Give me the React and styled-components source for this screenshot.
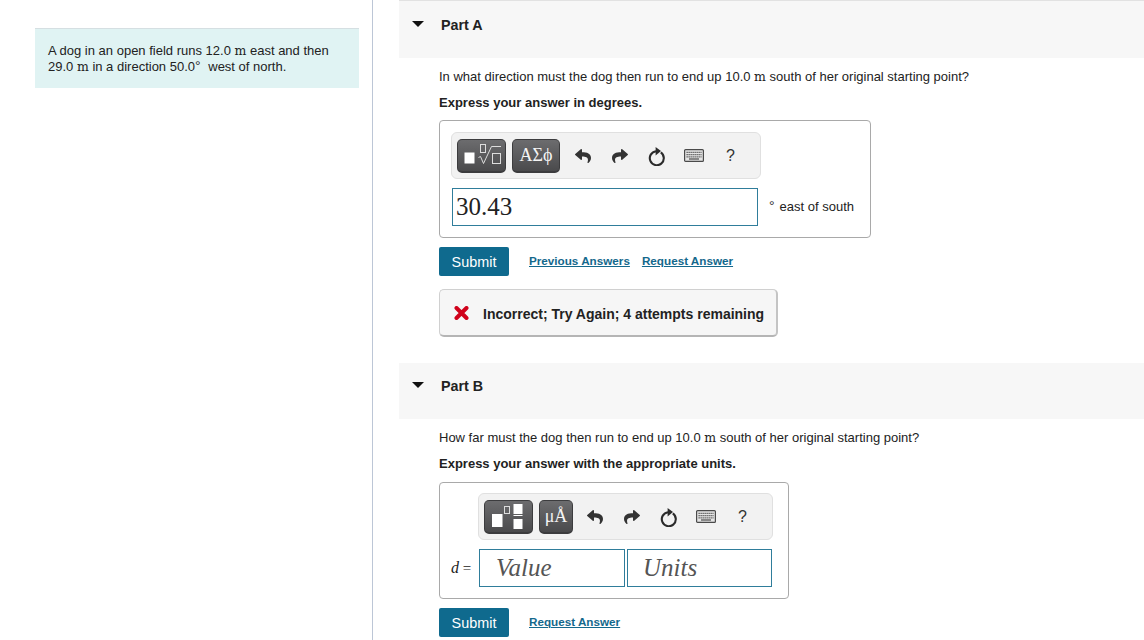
import React from "react";
import styled, { createGlobalStyle } from "styled-components";
import { FaReply, FaShare } from "react-icons/fa";

const GlobalStyle = createGlobalStyle`
  html, body {
    margin: 0;
    padding: 0;
    background: #fff;
    overflow: hidden;
  }
  * { box-sizing: border-box; }
`;

const Page = styled.div`
  display: flex;
  width: 1144px;
  height: 640px;
  overflow: hidden;
  font-family: "Liberation Sans", Arial, sans-serif;
  color: #222;
`;

const Sidebar = styled.aside`
  width: 373px;
  flex: none;
  height: 100%;
  padding: 28px 13px 0 35px;
  border-right: 1px solid #bcc6d6;
`;

const ProblemBox = styled.div`
  height: 60px;
  padding: 14px 13px 0;
  background: #e0f3f3;
  border-top: 1px solid #d5dfe2;
  font-size: 13px;
  line-height: 16px;
`;

const Main = styled.main`
  flex: 1;
  min-width: 0;
  padding-left: 26px;
`;

const PartHeader = styled.div`
  display: flex;
  align-items: center;
  height: ${(p) => p.$height}px;
  margin-top: ${(p) => p.$top || 0}px;
  padding: 0 0 ${(p) => p.$shift}px 13px;
  background: #f7f7f7;
  border-top: ${(p) => (p.$ruled ? "1px solid #e2e2e2" : "none")};
`;

const Caret = styled.span`
  width: 0;
  height: 0;
  margin-right: 17px;
  border-left: 6px solid transparent;
  border-right: 6px solid transparent;
  border-top: 6px solid #111;
  transform: translateY(-1px);
`;

const PartTitle = styled.h2`
  margin: 0;
  font-size: 14.3px;
  font-weight: 700;
  color: #222;
`;

const PartBody = styled.section`
  padding: ${(p) => p.$top}px 0 0 40px;
`;

const Question = styled.p`
  margin: 0;
  font-size: 13px;
  line-height: 16px;
`;

const Instruction = styled.p`
  margin: 10px 0 0;
  font-size: 13px;
  line-height: 16px;
  font-weight: 700;
`;

const Unit = styled.span`
  font-family: "DejaVu Serif", "Liberation Serif", serif;
  font-size: 12.5px;
`;

const AnswerBox = styled.div`
  width: ${(p) => p.$width}px;
  height: ${(p) => p.$height}px;
  margin-top: ${(p) => p.$top}px;
  padding: ${(p) => p.$pad}px 0 0 ${(p) => p.$left}px;
  border: 1px solid #a9a9a9;
  border-radius: 4px;
`;

const Toolbar = styled.div`
  display: flex;
  align-items: center;
  width: ${(p) => p.$width}px;
  height: 47px;
  margin-left: ${(p) => p.$indent || 0}px;
  padding-left: 5px;
  background: #f2f2f2;
  border: 1px solid #e0e0e0;
  border-radius: 6px;
`;

const TemplateButton = styled.button`
  display: flex;
  align-items: center;
  justify-content: center;
  width: ${(p) => p.$width}px;
  height: 34px;
  margin-right: ${(p) => p.$gap}px;
  padding: 0;
  color: #f4f4f4;
  background: linear-gradient(#6c6c6e, #4a4a4c);
  border: 1px solid #3c3c3e;
  border-bottom-width: 2px;
  border-radius: 5px;
  font-family: "Liberation Serif", serif;
  font-size: 18px;
`;

const ToolSlot = styled.span`
  display: flex;
  align-items: center;
  justify-content: center;
  flex: none;
  width: 37px;
  color: #333;
`;

const HelpMark = styled.span`
  font-size: 16px;
  color: #333;
`;

const AnswerRow = styled.div`
  display: flex;
  align-items: center;
  margin-top: 9px;
`;

const ValueInput = styled.div`
  display: flex;
  align-items: center;
  width: ${(p) => p.$width}px;
  height: 38px;
  margin-left: ${(p) => p.$indent || 0}px;
  margin-right: ${(p) => p.$gap || 0}px;
  padding-left: ${(p) => p.$pad}px;
  border: 1px solid #2f7d9b;
  font-family: "Liberation Serif", serif;
  font-size: 25px;
  font-style: ${(p) => (p.$hint ? "italic" : "normal")};
  color: ${(p) => (p.$hint ? "#555" : "#222")};
`;

const UnitSuffix = styled.span`
  display: flex;
  align-items: baseline;
  margin: 0 0 2px 11px;
  font-size: 13px;
`;

const Degree = styled.span`
  margin-right: ${(p) => p.$gap}px;
  font-size: 14px;
  line-height: 0;
  color: #333;
`;

const VarLabel = styled.span`
  width: 28px;
  font-family: "Liberation Serif", serif;
  font-size: 15px;
  white-space: nowrap;

  i { font-size: 16px; }
`;

const ActionRow = styled.div`
  display: flex;
  align-items: center;
  margin-top: 9px;
`;

const SubmitButton = styled.button`
  width: 70px;
  height: 29px;
  margin-right: 20px;
  padding: 0;
  background: #0f6a8e;
  color: #fff;
  border: none;
  border-radius: 2px;
  font-family: "Liberation Sans", Arial, sans-serif;
  font-size: 14.4px;
`;

const TextLink = styled.a`
  margin: 0 12px 2px 0;
  color: #14688c;
  font-size: 11.7px;
  font-weight: 700;
  text-decoration: underline;
`;

const Feedback = styled.div`
  display: flex;
  align-items: center;
  width: 339px;
  height: 48px;
  margin-top: 13px;
  padding: 3px 0 0 14px;
  background: #f6f6f6;
  border: 1px solid #d0d0d0;
  border-bottom: 2px solid #b5b5b5;
  border-right: 2px solid #c4c4c4;
  border-radius: 5px;
  font-size: 14px;
  font-weight: 700;
  color: #222;

  svg { margin: 0 14px 3px 0; }
`;

const RedoIcon = () => <FaShare size={16} />;
const UndoIcon = () => <FaReply size={16} />;

const ResetIcon = () => (
  <svg width="18" height="20" viewBox="0 0 18 20">
    <path d="M12.8 6.4 A7 7 0 1 1 8 5.2" fill="none" stroke="#2b2b2b" strokeWidth="2.1" />
    <path d="M7.6 1 L7.6 9.4 L13 5 Z" fill="#2b2b2b" />
  </svg>
);

const KeyboardIcon = () => (
  <svg width="20" height="13" viewBox="0 0 20 13">
    <rect x="0.6" y="0.6" width="18.8" height="11.8" rx="1" fill="#e4e4e4" stroke="#4a4a4a" strokeWidth="1.2" />
    <path d="M2.5 3.4h15M2.5 5.6h15M2.5 7.8h15" stroke="#555" strokeWidth="1.2" strokeDasharray="1.3 0.7" />
    <path d="M5 10h10" stroke="#555" strokeWidth="1.3" />
  </svg>
);

const RadicalGlyph = () => (
  <svg width="38" height="27" viewBox="0 0 38 27">
    <rect x="1.5" y="10.5" width="10" height="11" fill="#fff" />
    <rect x="17.5" y="2.5" width="5" height="8" fill="none" stroke="#ddd" />
    <path d="M15.5 15.5 L17.5 14.5 L20.5 21.5 L28.5 4.5 H38" fill="none" stroke="#ddd" strokeWidth="1" />
    <rect x="29.5" y="11.5" width="8" height="10" fill="none" stroke="#ddd" />
  </svg>
);

const FractionGlyph = () => (
  <svg width="34" height="27" viewBox="0 0 34 27">
    <rect x="0" y="11" width="10.5" height="13" fill="#fff" />
    <rect x="12.5" y="3.5" width="5" height="7" fill="none" stroke="#ddd" />
    <rect x="21.5" y="1" width="9" height="10" fill="#fff" />
    <rect x="21.5" y="12" width="9" height="1" fill="#fff" />
    <rect x="21.5" y="16" width="9" height="10" fill="#fff" />
  </svg>
);

const CrossIcon = () => (
  <svg width="15" height="14" viewBox="0 0 15 14">
    <path d="M2.5 2 L12.5 12 M12.5 2 L2.5 12" stroke="#d0021b" strokeWidth="4" strokeLinecap="round" />
  </svg>
);

const ToolIcons = () => (
  <>
    <ToolSlot><UndoIcon /></ToolSlot>
    <ToolSlot><RedoIcon /></ToolSlot>
    <ToolSlot><ResetIcon /></ToolSlot>
    <ToolSlot><KeyboardIcon /></ToolSlot>
    <ToolSlot><HelpMark>?</HelpMark></ToolSlot>
  </>
);

export default function App() {
  return (
    <Page>
      <GlobalStyle />
      <Sidebar>
        <ProblemBox>
          A dog in an open field runs 12.0 <Unit>m</Unit> east and then
          <br />
          29.0 <Unit>m</Unit> in a direction 50.0<Degree $gap={4}>°</Degree> west of north.
        </ProblemBox>
      </Sidebar>
      <Main>
        <PartHeader $ruled $height={58} $shift={9}>
          <Caret />
          <PartTitle>Part A</PartTitle>
        </PartHeader>
        <PartBody $top={11}>
          <Question>
            In what direction must the dog then run to end up 10.0 <Unit>m</Unit> south of her original starting point?
          </Question>
          <Instruction>Express your answer in degrees.</Instruction>
          <AnswerBox $top={9} $pad={11} $width={432} $height={118} $left={11}>
            <Toolbar $width={310}>
              <TemplateButton $width={49} $gap={6}><RadicalGlyph /></TemplateButton>
              <TemplateButton $width={48} $gap={4}>ΑΣϕ</TemplateButton>
              <ToolIcons />
            </Toolbar>
            <AnswerRow>
              <ValueInput $indent={1} $width={306} $pad={3}>30.43</ValueInput>
              <UnitSuffix><Degree $gap={5}>°</Degree>east of south</UnitSuffix>
            </AnswerRow>
          </AnswerBox>
          <ActionRow>
            <SubmitButton>Submit</SubmitButton>
            <TextLink>Previous Answers</TextLink>
            <TextLink>Request Answer</TextLink>
          </ActionRow>
          <Feedback>
            <CrossIcon />
            Incorrect; Try Again; 4 attempts remaining
          </Feedback>
        </PartBody>
        <PartHeader $top={26} $height={56} $shift={11}>
          <Caret />
          <PartTitle>Part B</PartTitle>
        </PartHeader>
        <PartBody $top={11}>
          <Question>
            How far must the dog then run to end up 10.0 <Unit>m</Unit> south of her original starting point?
          </Question>
          <Instruction>Express your answer with the appropriate units.</Instruction>
          <AnswerBox $top={10} $pad={10} $width={350} $height={117} $left={11}>
            <Toolbar $width={295} $indent={27}>
              <TemplateButton $width={49} $gap={6}><FractionGlyph /></TemplateButton>
              <TemplateButton $width={34} $gap={3}>μÅ</TemplateButton>
              <ToolIcons />
            </Toolbar>
            <AnswerRow>
              <VarLabel><i>d</i> =</VarLabel>
              <ValueInput $hint $width={146} $pad={16} $gap={2}>Value</ValueInput>
              <ValueInput $hint $width={145} $pad={15}>Units</ValueInput>
            </AnswerRow>
          </AnswerBox>
          <ActionRow>
            <SubmitButton>Submit</SubmitButton>
            <TextLink>Request Answer</TextLink>
          </ActionRow>
        </PartBody>
      </Main>
    </Page>
  );
}
